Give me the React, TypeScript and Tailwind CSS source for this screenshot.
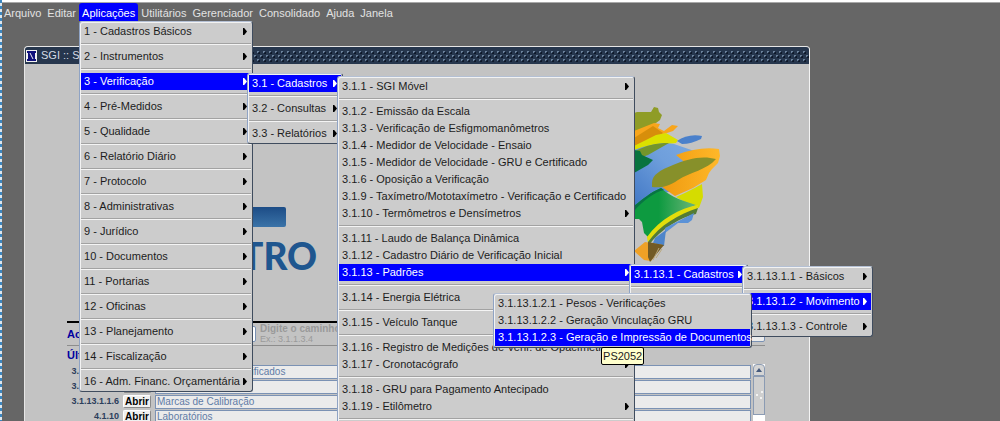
import React from "react";

type Item = { label: string; sub?: boolean; open?: boolean; menu?: React.ReactNode };

function Row({ item }: { item: Item }) {
  return (
    <li role="none" className={item.menu ? "relative" : ""}>
      <button
        type="button"
        role="menuitem"
        aria-haspopup={item.sub ? "menu" : undefined}
        className={
          "flex h-[17px] w-full items-center justify-between whitespace-nowrap pl-[3px] text-left " +
          (item.open ? "bg-[#0000ff] text-white" : "text-[#1c1c1c]")
        }
      >
        <span>{item.label}</span>
        {item.sub && (
          <svg width="4" height="7" viewBox="0 0 4 7" className={"mr-1 shrink-0 " + (item.open ? "fill-white" : "fill-black")}>
            <path d="M0 0H1.2L4 3.5L1.2 7H0Z" />
          </svg>
        )}
      </button>
      {item.menu}
    </li>
  );
}

function Menu({ groups, className, label }: { groups: Item[][]; className: string; label: string }) {
  return (
    <ul
      role="menu"
      aria-label={label}
      className={
        "absolute z-10 rounded-[3px] border border-t-[#b4c0d4] border-r-[#3f4c5e] border-b-[#3f4c5e] border-l-[#8fa3c4] bg-[#cccccc] p-px shadow-[inset_1px_1px_0_#f2f2f2] " +
        className
      }
    >
      {groups.map((group, g) => (
        <React.Fragment key={g}>
          {g > 0 && <li role="separator" className="my-[3px] h-[2px] border-t border-b border-t-[#a2a2a2] border-b-[#f4f4f4]" />}
          {group.map((item) => (
            <Row key={item.label} item={item} />
          ))}
        </React.Fragment>
      ))}
    </ul>
  );
}

const each = (items: Item[]) => items.map((i) => [i]);

const documentos = (
  <Menu
    label="Movimento"
    className="top-0 right-full -mr-2 w-[259px]"
    groups={[
      [
        { label: "3.1.13.1.2.1 - Pesos - Verificações" },
        { label: "3.1.13.1.2.2 - Geração Vinculação GRU" },
        {
          label: "3.1.13.1.2.3 - Geração e Impressão de Documentos",
          open: true,
          menu: (
            <div
              role="tooltip"
              className="absolute top-[18px] left-[106px] z-20 flex h-[18px] items-center rounded-[2px] border border-black bg-[#ffffcc] px-px text-[#1c1c1c]"
            >
              PS2052
            </div>
          ),
        },
      ],
    ]}
  />
);

const movimento = (
  <Menu
    label="Cadastros de padrões"
    className="top-0 left-full -ml-1 w-[131px]"
    groups={each([
      { label: "3.1.13.1.1 - Básicos", sub: true },
      { label: "3.1.13.1.2 - Movimento", sub: true, open: true, menu: documentos },
      { label: "3.1.13.1.3 - Controle", sub: true },
    ])}
  />
);

const padroes = (
  <Menu
    label="Padrões"
    className="top-0 left-full -ml-1 h-[71px] w-[119px]"
    groups={[[{ label: "3.1.13.1 - Cadastros", sub: true, open: true, menu: movimento }], []]}
  />
);

const cadastros = (
  <Menu
    label="Cadastros"
    className="top-px left-full -ml-1 w-[298px]"
    groups={[
      [{ label: "3.1.1 - SGI Móvel", sub: true }],
      [
        { label: "3.1.2 - Emissão da Escala" },
        { label: "3.1.3 - Verificação de Esfigmomanômetros" },
        { label: "3.1.4 - Medidor de Velocidade - Ensaio" },
        { label: "3.1.5 - Medidor de Velocidade - GRU e Certificado" },
        { label: "3.1.6 - Oposição a Verificação" },
        { label: "3.1.9 - Taxímetro/Mototaxímetro - Verificação e Certificado" },
        { label: "3.1.10 - Termômetros e Densímetros", sub: true },
      ],
      [
        { label: "3.1.11 - Laudo de Balança Dinâmica" },
        { label: "3.1.12 - Cadastro Diário de Verificação Inicial" },
        { label: "3.1.13 - Padrões", sub: true, open: true, menu: padroes },
      ],
      [{ label: "3.1.14 - Energia Elétrica" }],
      [{ label: "3.1.15 - Veículo Tanque" }],
      [
        { label: "3.1.16 - Registro de Medições de Verif. de Opacímetro" },
        { label: "3.1.17 - Cronotacógrafo", sub: true },
      ],
      [{ label: "3.1.18 - GRU para Pagamento Antecipado" }, { label: "3.1.19 - Etilômetro", sub: true }],
      [],
    ]}
  />
);

const verificacao = (
  <Menu
    label="Verificação"
    className="top-0 left-full -ml-1 w-[96px]"
    groups={each([
      { label: "3.1 - Cadastros", sub: true, open: true, menu: cadastros },
      { label: "3.2 - Consultas", sub: true },
      { label: "3.3 - Relatórios", sub: true },
    ])}
  />
);

const aplicacoes = (
  <Menu
    label="Aplicações"
    className="top-full left-0 w-[174px]"
    groups={each([
      { label: "1 - Cadastros Básicos", sub: true },
      { label: "2 - Instrumentos", sub: true },
      { label: "3 - Verificação", sub: true, open: true, menu: verificacao },
      { label: "4 - Pré-Medidos", sub: true },
      { label: "5 - Qualidade", sub: true },
      { label: "6 - Relatório Diário", sub: true },
      { label: "7 - Protocolo", sub: true },
      { label: "8 - Administrativas", sub: true },
      { label: "9 - Jurídico", sub: true },
      { label: "10 - Documentos", sub: true },
      { label: "11 - Portarias", sub: true },
      { label: "12 - Oficinas", sub: true },
      { label: "13 - Planejamento", sub: true },
      { label: "14 - Fiscalização", sub: true },
      { label: "16 - Adm. Financ. Orçamentária", sub: true },
    ])}
  />
);

const menuBar = ["Arquivo", "Editar", "Aplicações", "Utilitários", "Gerenciador", "Consolidado", "Ajuda", "Janela"];

function BrazilMap() {
  return (
    <svg width="140" height="160" viewBox="580 104 140 160" aria-hidden="true">
      <defs>
        <linearGradient id="sky" x1="0" y1="1" x2="1" y2="0">
          <stop offset="0" stopColor="#3f76c4" />
          <stop offset="0.6" stopColor="#6f9fdc" />
          <stop offset="1" stopColor="#7aa9e2" />
        </linearGradient>
        <linearGradient id="leaf" x1="0" y1="0" x2="1" y2="0">
          <stop offset="0.4" stopColor="#0d9a40" />
          <stop offset="1" stopColor="#6db679" />
        </linearGradient>
        <linearGradient id="sun" x1="0" y1="0" x2="1" y2="0">
          <stop offset="0" stopColor="#ef9a10" />
          <stop offset="1" stopColor="#ffb829" />
        </linearGradient>
      </defs>
      <path d="M620 118L637 112L651 112L654 107L658 108L659 112L662 115L660 120L656 123L620 138Z" fill="#8f9c26" />
      <path d="M634 131L654 123L660 124L658 128L664 131L672 125L678 126L673 131L664 134L660 136L634 152Z" fill="#f8a51b" />
      <path d="M634 138L653 126L663 133L656 138L634 150Z" fill="#d78e0b" />
      <path d="M634 146L656 135L666 133L678 140L676 143L660 145L634 158Z" fill="#dbe000" />
      <path d="M677 141C684 136 693 134 702 136L701 139C695 142 688 144 682 144Z" fill="#4a80cb" />
      <path d="M634 150C650 144 664 142 674 144L700 153L690 185L662 194L634 210Z" fill="url(#sky)" />
      <path d="M634 152C646 145 656 143 669 143L648 155L634 160Z" fill="#74952b" />
      <path d="M634 150L640 151L642 155L653 160L648 165L634 173Z" fill="#08733e" />
      <path d="M676 155C692 149 706 147 719 149L720 156L718 163L712 169L709 173L706 180L693 188L675 196L662 187L694 170Z" fill="url(#sun)" />
      <path d="M652 183C652 175 660 170 673 165C687 159 702 155 716 159C707 170 690 172 678 180C668 187 660 188 652 187Z" fill="#87902a" />
      <path d="M676 197C690 191 698 186 702 184L703 197L699 208L690 205Z" fill="#d5dc00" />
      <path d="M634 206C643 199 651 192 661 188C672 198 684 201 696 205C680 212 660 222 648 237L644 233L642 222L639 219L634 219Z" fill="url(#leaf)" />
      <path d="M634 206C643 199 651 192 661 188L664 190C654 192 643 201 634 211Z" fill="#087443" />
      <path d="M647 237C660 219 680 208 698 205L697 211C678 215 661 226 648 244Z" fill="#e2dd0b" />
      <path d="M648 242C660 225 679 214 698 208L696 214C681 217 662 228 648 246Z" fill="#537c36" />
      <path d="M665 228L694 213L692 220L688 223L678 223L665 233Z" fill="#5b92d7" />
      <path d="M655 238L666 230L664 246L653 243Z" fill="#4e85ca" />
      <path d="M634 251L645 242L663 245L651 261L644 260Z" fill="#efa126" />
      <path d="M648 242L664 245L650 262L648 257Z" fill="#725a24" />
      <path d="M659 248L653 260M662 249L656 258" stroke="#b9a77a" strokeWidth="1" />
    </svg>
  );
}

const rows = [
  { code: "3.1.13.1.2.1", name: "Verificações dos Certificados" },
  { code: "3.1.13.1.1.5", name: "" },
  { code: "3.1.13.1.1.6", name: "Marcas de Calibração" },
  { code: "4.1.10", name: "Laboratórios" },
];

export default function App() {
  return (
    <div className="relative flex h-screen flex-col overflow-hidden bg-[#666666] font-['Liberation_Sans',Arial,sans-serif] text-[11px] leading-[17px]">
      <div className="h-[3px] shrink-0 border-b border-[#a8a8a8] bg-white" />

      <nav role="menubar" className="relative z-10 flex h-[18px] shrink-0 pl-px text-[#e2e2e2]">
        {menuBar.map((name) => (
          <div key={name} className="relative">
            <button
              type="button"
              role="menuitem"
              className={"flex h-[18px] items-center px-[3px] pt-0.5 " + (name === "Aplicações" ? "rounded-t-[3px] bg-[#0000ff] text-white" : "")}
            >
              {name}
            </button>
            {name === "Aplicações" && aplicacoes}
          </div>
        ))}
      </nav>

      <main className="mt-[25px] ml-[24px] flex w-[786px] flex-1 flex-col overflow-hidden rounded-t-[4px] border border-b-0 border-[#e6e6e6] border-r-[#f4f4f4] bg-[#c3c3c3]">
        <header className="flex h-[17px] shrink-0 items-center bg-[#26364d] pl-px text-[#d4dae4]">
          <svg width="11" height="12" viewBox="0 0 11 12" aria-hidden="true">
            <path d="M0 0H11V12H0Z" fill="#f2f2f2" />
            <path d="M1 1H10V3H9V9H10V11H1V9H2V3H1Z" fill="#10107c" />
            <path d="M4 3L7 9" stroke="#f2f2f2" strokeWidth="1" />
          </svg>
          <h1 className="ml-1 w-[150px]">SGI :: Sistema</h1>
          <svg className="h-[12px] flex-1" aria-hidden="true">
            <defs>
              <pattern id="grip" width="6" height="12" patternUnits="userSpaceOnUse">
                <path d="M0 1h2v1h-1v1h-1zM3 5h2v1h-1v1h-1zM0 9h2v1h-1v1h-1z" fill="#6d839c" />
                <path d="M2 2v1h-1v1h2v-2zM5 6v1h-1v1h2v-2zM2 10v1h-1v1h2v-2z" fill="#0e1829" />
              </pattern>
            </defs>
            <rect width="100%" height="12" fill="url(#grip)" />
          </svg>
        </header>

        <section className="flex h-[257px] shrink-0 justify-between pt-[40px] pr-[89px] pl-[170px]">
          <svg className="mt-[100px]" width="130" height="72" viewBox="195 204 130 72" role="img" aria-label="INMETRO">
            <defs>
              <linearGradient id="brand" x1="0" y1="0" x2="0" y2="1">
                <stop offset="0" stopColor="#1c4c86" />
                <stop offset="1" stopColor="#3a73a8" />
              </linearGradient>
            </defs>
            <rect x="200" y="207" width="86" height="20" rx="2" fill="url(#brand)" />
            <text x="317" y="270" textAnchor="end" fontFamily="Lato" fontWeight="900" fontSize="37" fill="#1f568f">
              TRO
            </text>
          </svg>
          <BrazilMap />
        </section>

        <section className="mr-[44px] ml-[42px] flex flex-col text-[10px]">
          <div className="flex h-[25px] items-center justify-between border-t-2 border-b border-t-black border-b-[#8d8d8d]">
            <label htmlFor="atalho" className="w-[83px] text-[11px] font-bold text-[#0000a0]">
              Aces
            </label>
            <input id="atalho" className="h-[16px] w-[106px] rounded-[2px] border border-[#7b92b4] bg-white" />
            <p className="flex-1 pl-1 leading-[10px] font-bold text-[#9a9a9a]">
              Digite o caminho do menu
              <span className="block text-[9px] font-normal">Ex.: 3.1.1.3.4</span>
            </p>
            <span className="h-[16px] w-[120px] rounded-[2px] border border-[#7b92b4] bg-[#ececec]" />
          </div>
          <h2 className="h-[16px] text-[11px] leading-[18px] font-bold text-[#0000a0]">Últimos</h2>
          <div className="mt-0.5 flex">
            <ul className="flex-1">
              {rows.map((row) => (
                <li key={row.code} className="flex h-[15px] items-center gap-1 text-[10px]">
                  <span className="flex w-[52px] justify-end text-[9px] font-bold whitespace-nowrap text-[#2c3e5c]">{row.code}</span>
                  <button type="button" className="h-[13px] w-[28px] rounded-[2px] border border-[#8a8a8a] border-t-white border-l-white bg-[#f0f0f0] leading-[11px] font-bold text-black">
                    Abrir
                  </button>
                  <input
                    aria-label={row.code}
                    readOnly
                    value={row.name}
                    className="h-[14px] flex-1 border border-[#7b92b4] bg-[#ebebeb] px-px text-[#5f7ba6]"
                  />
                </li>
              ))}
            </ul>
            <div className="ml-0.5 flex w-[12px] flex-col bg-white">
              <button type="button" aria-label="Subir" className="flex h-[12px] items-center justify-center rounded-t-[4px] border border-[#8b9bb3] bg-[#d5d5d5]">
                <svg width="6" height="4" viewBox="0 0 6 4">
                  <path d="M3 0L6 4H0Z" fill="#44597c" />
                </svg>
              </button>
              <div className="flex h-[39px] items-center justify-center border border-[#8b9bb3] bg-[#cfcfcf]">
                <svg width="7" height="9" viewBox="0 0 7 9" fill="#f4f4f4">
                  <path d="M5 0h2v2h-2zM0 3h2v2h-2zM4 6h2v2h-2z" />
                </svg>
              </div>
            </div>
          </div>
        </section>
      </main>

      <svg className="absolute inset-y-0 left-0 h-full w-[2px]" aria-hidden="true">
        <defs>
          <pattern id="dash" width="2" height="6" patternUnits="userSpaceOnUse">
            <path d="M0 0h2v6h-2z" fill="#dfe6ec" />
            <path d="M0 0h2v3h-2z" fill="#3b86c0" />
          </pattern>
        </defs>
        <rect width="2" height="100%" fill="url(#dash)" />
      </svg>
    </div>
  );
}
